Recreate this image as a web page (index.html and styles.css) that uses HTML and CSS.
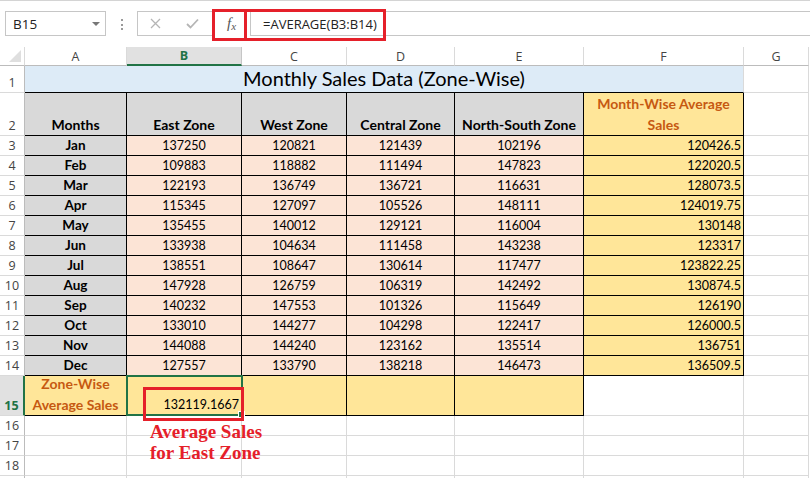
FILE: index.html
```html
<!DOCTYPE html>
<html>
<head>
<meta charset="utf-8">
<link rel="stylesheet" href="styles.css">
</head>
<body>
<div class="app">
  <div class="toolbar">
    <div class="namebox"><span class="nb-text">B15</span><span class="caret"></span></div>
    <div class="grip"><i></i><i></i><i></i></div>
    <div class="btns">
      <svg class="ic-x" width="11" height="11" viewBox="0 0 11 11"><path d="M1 1 L10 10 M10 1 L1 10" stroke="#b5b5b5" stroke-width="1.3" fill="none"/></svg>
      <svg class="ic-ok" width="13" height="11" viewBox="0 0 13 11"><path d="M1 6 L4.5 9.5 L12 1.5" stroke="#b5b5b5" stroke-width="1.8" fill="none"/></svg>
    </div>
    <div class="fx"><span class="fx-f">f</span><span class="fx-x">x</span></div>
    <div class="formula">=AVERAGE(B3:B14)</div>
    <div class="hl"></div>
    <div class="hl-div"></div>
  </div>
  <div class="sheet">
    <!-- column headers -->
    <div class="ch corner"><span class="tri"></span></div>
    <div class="ch">A</div><div class="ch sel">B</div><div class="ch">C</div><div class="ch">D</div><div class="ch">E</div><div class="ch">F</div><div class="ch">G</div>

    <!-- row 1 -->
    <div class="rh">1</div>
    <div class="c title">Monthly Sales Data (Zone-Wise)</div>
    <div class="c"></div>

    <!-- row 2 -->
    <div class="rh">2</div>
    <div class="c bd gray b hd">Months</div>
    <div class="c bd gray b hd">East Zone</div>
    <div class="c bd gray b hd">West Zone</div>
    <div class="c bd gray b hd">Central Zone</div>
    <div class="c bd gray b hd">North-South Zone</div>
    <div class="c bd yellow b org wrap">Month-Wise Average Sales</div>
    <div class="c"></div>

    <div class="rh">3</div><div class="c bd gray b">Jan</div><div class="c bd peach">137250</div><div class="c bd peach">120821</div><div class="c bd peach">121439</div><div class="c bd peach">102196</div><div class="c bd yellow r">120426.5</div><div class="c"></div>
    <div class="rh">4</div><div class="c bd gray b">Feb</div><div class="c bd peach">109883</div><div class="c bd peach">118882</div><div class="c bd peach">111494</div><div class="c bd peach">147823</div><div class="c bd yellow r">122020.5</div><div class="c"></div>
    <div class="rh">5</div><div class="c bd gray b">Mar</div><div class="c bd peach">122193</div><div class="c bd peach">136749</div><div class="c bd peach">136721</div><div class="c bd peach">116631</div><div class="c bd yellow r">128073.5</div><div class="c"></div>
    <div class="rh">6</div><div class="c bd gray b">Apr</div><div class="c bd peach">115345</div><div class="c bd peach">127097</div><div class="c bd peach">105526</div><div class="c bd peach">148111</div><div class="c bd yellow r">124019.75</div><div class="c"></div>
    <div class="rh">7</div><div class="c bd gray b">May</div><div class="c bd peach">135455</div><div class="c bd peach">140012</div><div class="c bd peach">129121</div><div class="c bd peach">116004</div><div class="c bd yellow r">130148</div><div class="c"></div>
    <div class="rh">8</div><div class="c bd gray b">Jun</div><div class="c bd peach">133938</div><div class="c bd peach">104634</div><div class="c bd peach">111458</div><div class="c bd peach">143238</div><div class="c bd yellow r">123317</div><div class="c"></div>
    <div class="rh">9</div><div class="c bd gray b">Jul</div><div class="c bd peach">138551</div><div class="c bd peach">108647</div><div class="c bd peach">130614</div><div class="c bd peach">117477</div><div class="c bd yellow r">123822.25</div><div class="c"></div>
    <div class="rh">10</div><div class="c bd gray b">Aug</div><div class="c bd peach">147928</div><div class="c bd peach">126759</div><div class="c bd peach">106319</div><div class="c bd peach">142492</div><div class="c bd yellow r">130874.5</div><div class="c"></div>
    <div class="rh">11</div><div class="c bd gray b">Sep</div><div class="c bd peach">140232</div><div class="c bd peach">147553</div><div class="c bd peach">101326</div><div class="c bd peach">115649</div><div class="c bd yellow r">126190</div><div class="c"></div>
    <div class="rh">12</div><div class="c bd gray b">Oct</div><div class="c bd peach">133010</div><div class="c bd peach">144277</div><div class="c bd peach">104298</div><div class="c bd peach">122417</div><div class="c bd yellow r">126000.5</div><div class="c"></div>
    <div class="rh">13</div><div class="c bd gray b">Nov</div><div class="c bd peach">144088</div><div class="c bd peach">144240</div><div class="c bd peach">123162</div><div class="c bd peach">135514</div><div class="c bd yellow r">136751</div><div class="c"></div>
    <div class="rh">14</div><div class="c bd gray b">Dec</div><div class="c bd peach">127557</div><div class="c bd peach">133790</div><div class="c bd peach">138218</div><div class="c bd peach">146473</div><div class="c bd yellow r">136509.5</div><div class="c"></div>

    <!-- row 15 -->
    <div class="rh sel">15</div>
    <div class="c bd yellow b org wrap">Zone-Wise Average Sales</div>
    <div class="c bd yellow r active">132119.1667<span class="handle"></span></div>
    <div class="c bd yellow"></div>
    <div class="c bd yellow"></div>
    <div class="c bd yellow"></div>
    <div class="c"></div>
    <div class="c"></div>

    <div class="rh">16</div><div class="c"></div><div class="c"></div><div class="c"></div><div class="c"></div><div class="c"></div><div class="c"></div><div class="c"></div>
    <div class="rh">17</div><div class="c"></div><div class="c"></div><div class="c"></div><div class="c"></div><div class="c"></div><div class="c"></div><div class="c"></div>
    <div class="rh">18</div><div class="c"></div><div class="c"></div><div class="c"></div><div class="c"></div><div class="c"></div><div class="c"></div><div class="c"></div>
    <div class="rh"></div><div class="c"></div><div class="c"></div><div class="c"></div><div class="c"></div><div class="c"></div><div class="c"></div><div class="c"></div>

    <div class="callout"></div>
    <div class="note">Average Sales<br>for East Zone</div>
  </div>
</div>
</body>
</html>
```

FILE: styles.css
```css
html, body {
  margin: 0;
  padding: 0;
  background: #ffffff;
}
.app {
  width: 810px;
  height: 478px;
  overflow: hidden;
  font-family: "Open Sans", "Liberation Sans", sans-serif;
}

/* ---------- formula bar ---------- */
.toolbar {
  position: relative;
  height: 47px;
  box-sizing: border-box;
  border-top: 1px solid #d4d4d4;
  padding: 10px 0 0 5px;
  display: flex;
  align-items: flex-start;
}
.namebox {
  width: 101px;
  height: 25px;
  box-sizing: border-box;
  border: 1px solid #c6c6c6;
  display: flex;
  align-items: center;
  justify-content: space-between;
  padding: 0 5px 0 7px;
}
.nb-text {
  font-size: 13.5px;
  color: #222;
}
.caret {
  width: 0;
  height: 0;
  border-left: 4px solid transparent;
  border-right: 4px solid transparent;
  border-top: 4px solid #777;
}
.grip {
  width: 3px;
  margin-left: 15px;
  padding-top: 8px;
  display: flex;
  flex-direction: column;
  gap: 2.5px;
}
.grip i {
  display: block;
  width: 2px;
  height: 2px;
  background: #9a9a9a;
}
.btns {
  margin-left: 13px;
  width: 76px;
  height: 25px;
  box-sizing: border-box;
  border: 1px solid #c6c6c6;
  border-right: none;
  display: flex;
  align-items: center;
  padding-left: 12px;
  gap: 25px;
}
.fx {
  width: 37px;
  height: 25px;
  display: flex;
  align-items: center;
  justify-content: center;
  font-family: "Liberation Serif", serif;
  font-style: italic;
  color: #555;
}
.fx-f { font-size: 15px; }
.fx-x { font-size: 11px; margin-top: 4px; }
.formula {
  flex: 1;
  height: 25px;
  box-sizing: border-box;
  border: 1px solid #c6c6c6;
  border-right: none;
  padding-left: 12px;
  display: flex;
  align-items: center;
  font-size: 13px;
  color: #222;
  white-space: nowrap;
}
.hl {
  position: absolute;
  left: 212px;
  top: 8px;
  width: 174px;
  height: 32px;
  box-sizing: border-box;
  border: 3px solid #e5202a;
}
.hl-div {
  position: absolute;
  left: 244px;
  top: 8px;
  width: 3px;
  height: 32px;
  background: #e5202a;
}

/* ---------- sheet ---------- */
.sheet {
  position: relative;
  display: grid;
  grid-template-columns: 25px 102px 115px 105px 108px 129px 160px 65px;
  grid-template-rows: 19px 27px 43px repeat(12, 20px) 40px repeat(4, 20px);
  font-family: "Lato", "Liberation Sans", sans-serif;
  font-size: 12.5px;
  color: #000;
}
.ch {
  box-sizing: border-box;
  border-right: 1px solid #dadada;
  border-bottom: 1px solid #bcbcbc;
  display: flex;
  align-items: center;
  justify-content: center;
  font-family: "Open Sans", "Liberation Sans", sans-serif;
  font-size: 12.5px;
  color: #444;
  background: #fff;
}
.ch.sel {
  background: #e1e1e1;
  color: #217346;
  font-weight: bold;
  border-bottom: 2px solid #217346;
  border-right-color: #c6c6c6;
}
.corner {
  justify-content: flex-end;
  align-items: flex-end;
}
.tri {
  width: 0;
  height: 0;
  border-left: 12px solid transparent;
  border-bottom: 12px solid #dfdfdf;
  margin: 0 3px 3px 0;
}
.rh {
  box-sizing: border-box;
  border-right: 1px solid #bcbcbc;
  border-bottom: 1px solid #dadada;
  display: flex;
  align-items: flex-end;
  justify-content: center;
  padding-bottom: 1px;
  font-family: "Open Sans", "Liberation Sans", sans-serif;
  font-size: 12.5px;
  line-height: 17px;
  color: #444;
}
.rh.sel {
  background: #e1e1e1;
  color: #217346;
  font-weight: bold;
  border-right: 2px solid #217346;
}
.c {
  box-sizing: border-box;
  border-right: 1px solid #dadada;
  border-bottom: 1px solid #dadada;
  display: flex;
  align-items: flex-end;
  justify-content: center;
  padding: 0 2px 1px 2px;
  line-height: 17px;
  white-space: nowrap;
  overflow: hidden;
}
.bd {
  border-right-color: #000;
  border-bottom-color: #000;
}
.gray { background: #d9d9d9; }
.peach { background: #fce4d6; }
.yellow { background: #ffe699; }
.b { font-weight: bold; font-size: 13.5px; }
.hd { font-size: 14px; padding-bottom: 2px; }
.r { justify-content: flex-end; }
.org { color: #c65911; }
.wrap {
  white-space: normal;
  text-align: center;
  line-height: 21px;
  font-size: 14px;
  padding-bottom: 0;
}
.title {
  grid-column: span 6;
  background: #ddebf7;
  border-bottom-color: #000;
  font-size: 20px;
  line-height: 25px;
}
.active {
  position: relative;
  overflow: visible;
  padding-bottom: 2px;
}
.active::after {
  content: "";
  position: absolute;
  left: -1px;
  top: -1px;
  right: -2px;
  bottom: -1px;
  border: 2px solid #217346;
}
.handle {
  position: absolute;
  right: -4px;
  bottom: -3px;
  width: 5px;
  height: 5px;
  background: #217346;
  border: 1px solid #fff;
  z-index: 2;
}
.callout {
  position: absolute;
  left: 143px;
  top: 340px;
  width: 101px;
  height: 34px;
  box-sizing: border-box;
  border: 3px solid #e5202a;
  z-index: 3;
}
.note {
  position: absolute;
  left: 150px;
  top: 374px;
  font-family: "Liberation Serif", "Times New Roman", serif;
  font-weight: bold;
  font-size: 19px;
  line-height: 21px;
  color: #e5202a;
  z-index: 3;
}
```
